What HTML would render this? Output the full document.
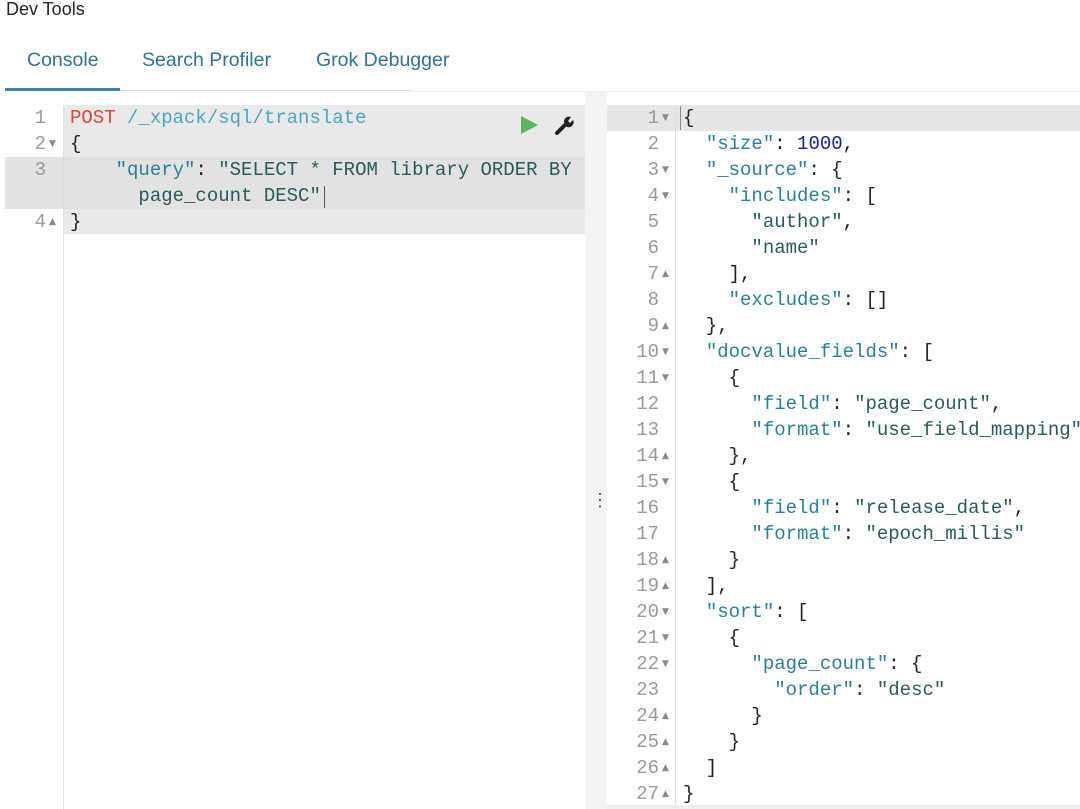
<!DOCTYPE html>
<html><head><meta charset="utf-8"><style>
*{margin:0;padding:0;box-sizing:border-box}
body{width:1080px;height:809px;background:#fff;position:relative;overflow:hidden;font-family:"Liberation Sans",sans-serif}
.t{position:absolute;white-space:pre}
.code{font-family:"Liberation Mono",monospace;font-size:19px;line-height:26px;position:absolute;white-space:pre;color:#222}
.ln{font-family:"Liberation Mono",monospace;font-size:19px;line-height:26px;position:absolute;white-space:pre;color:#999;text-align:right}
.fm{font-size:9px;line-height:26px;position:absolute;white-space:pre;color:#888;font-family:"DejaVu Sans",sans-serif}
.k{color:#2a7f96}.s{color:#2b5a5a}.n{color:#1a1aa6}.r{color:#e0453e}.u{color:#4aa6c6}
</style></head><body>
<div class="t" style="left:6px;top:-1px;font-size:18px;color:#222">Dev Tools</div>
<div class="t" style="left:27px;top:49px;font-size:19.5px;color:#2f7394">Console</div>
<div class="t" style="left:142px;top:49px;font-size:19.5px;color:#2f7394">Search Profiler</div>
<div class="t" style="left:316px;top:49px;font-size:19.5px;color:#2f7394">Grok Debugger</div>
<div style="position:absolute;left:5px;top:90px;width:407px;height:1px;background:#ddd"></div>
<div style="position:absolute;left:412px;top:91px;width:668px;height:1px;background:#eee"></div>
<div style="position:absolute;left:5px;top:88px;width:115px;height:3px;background:#3a88b0"></div>

<!-- left editor -->
<div style="position:absolute;left:63px;top:105px;width:522px;height:129px;background:#e9e9e9"></div>
<div style="position:absolute;left:5px;top:157px;width:580px;height:52px;background:#e2e2e2"></div>
<div style="position:absolute;left:63px;top:105px;width:1px;height:704px;background:#ddd"></div>
<div style="position:absolute;left:585px;top:92px;width:22px;height:717px;background:#f3f3f3"></div>
<div class="t" style="left:591px;top:490px;font-size:18px;color:#555">⋮</div>
<div class="ln" style="left:5px;top:105px;width:41px">1
2
3

4</div>
<div class="fm" style="left:49px;top:105px">
▼


▲</div>
<div class="code" style="left:70px;top:105px"><span class="r">POST</span> <span class="u">/_xpack/sql/translate</span>
{
    <span class="k">"query"</span>: <span class="s">"SELECT * FROM library ORDER BY</span>
<span class="s">      page_count DESC"</span>
}</div>
<div style="position:absolute;left:324px;top:186px;width:1px;height:22px;background:#555"></div>
<svg style="position:absolute;left:520px;top:116px" width="20" height="20"><path d="M1 0 L18 9 L1 18Z" fill="#5db65d"/></svg>
<svg style="position:absolute;left:554px;top:114px" width="22" height="22" viewBox="0 0 22 22"><path d="M3 19 L11 11" stroke="#222" stroke-width="4" stroke-linecap="round"/><path d="M10 8 A5 5 0 0 1 17 3 L14 7 L16 9 L19 6 A5 5 0 0 1 13 13Z" fill="#222"/></svg>

<!-- right editor -->
<div style="position:absolute;left:607px;top:105px;width:473px;height:26px;background:#e6e6e6"></div>
<div style="position:absolute;left:675px;top:105px;width:1px;height:700px;background:#ddd"></div>
<div style="position:absolute;left:607px;top:805px;width:473px;height:4px;background:#eee"></div>
<div style="position:absolute;left:680px;top:106px;width:1px;height:24px;background:#888"></div>
<div class="ln" style="left:607px;top:105px;width:52px">1
2
3
4
5
6
7
8
9
10
11
12
13
14
15
16
17
18
19
20
21
22
23
24
25
26
27</div>
<div class="fm" style="left:662px;top:105px">▼
 
▼
▼


▲

▲
▼
▼


▲
▼


▲
▲
▼
▼
▼

▲
▲
▲
▲</div>
<div class="code" style="left:683px;top:105px">{
  <span class="k">"size"</span>: <span class="n">1000</span>,
  <span class="k">"_source"</span>: {
    <span class="k">"includes"</span>: [
      <span class="s">"author"</span>,
      <span class="s">"name"</span>
    ],
    <span class="k">"excludes"</span>: []
  },
  <span class="k">"docvalue_fields"</span>: [
    {
      <span class="k">"field"</span>: <span class="s">"page_count"</span>,
      <span class="k">"format"</span>: <span class="s">"use_field_mapping"</span>
    },
    {
      <span class="k">"field"</span>: <span class="s">"release_date"</span>,
      <span class="k">"format"</span>: <span class="s">"epoch_millis"</span>
    }
  ],
  <span class="k">"sort"</span>: [
    {
      <span class="k">"page_count"</span>: {
        <span class="k">"order"</span>: <span class="s">"desc"</span>
      }
    }
  ]
}</div>
</body></html>
